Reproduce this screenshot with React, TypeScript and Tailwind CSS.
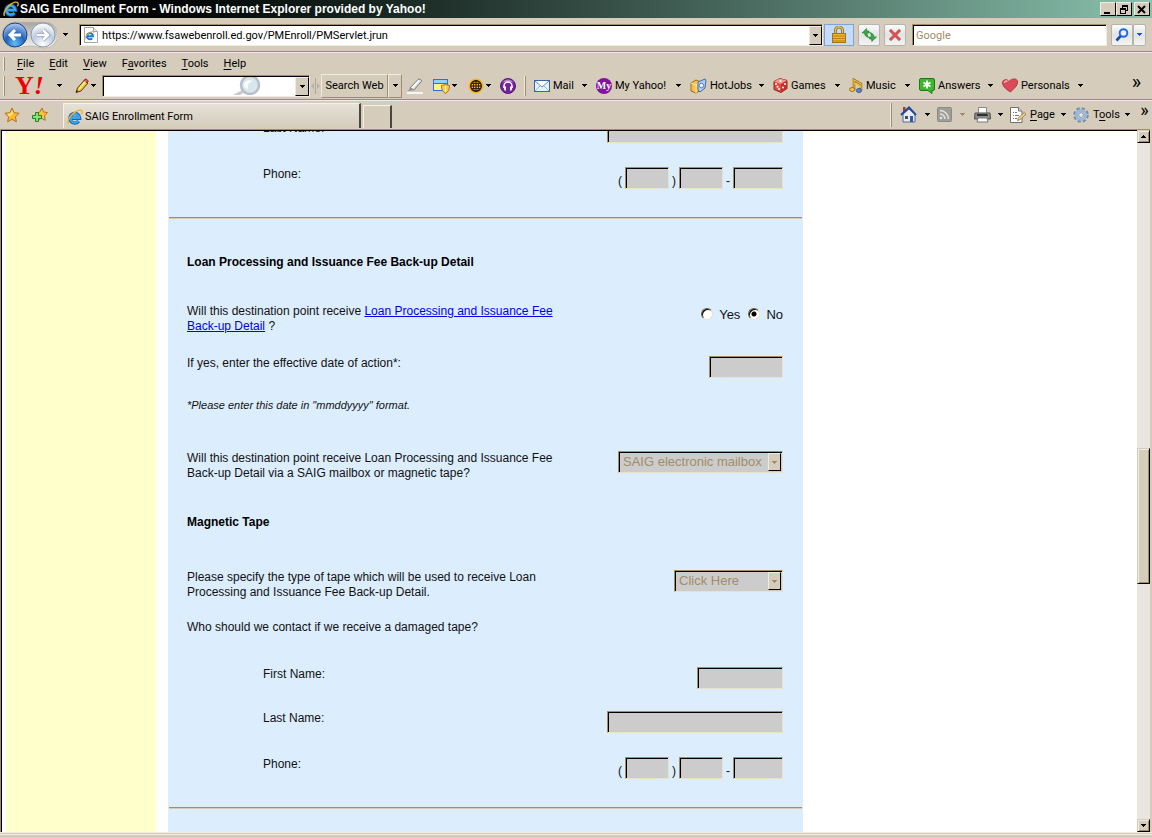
import type { ReactNode } from "react";
import { useState } from "react";

const UI_FONT = "font-['Roboto','Liberation_Sans',sans-serif]";

// Small black triangle used by every drop-down in the toolbars
function Caret({ className = "text-black" }: { className?: string }) {
  return (
    <svg width="5" height="3" viewBox="0 0 5 3" className={`shrink-0 ${className}`} shapeRendering="crispEdges">
      <path d="M0 0h5v1H4v1H3v1H2V2H1V1H0z" fill="currentColor" />
    </svg>
  );
}

function IeLogo({ size = 16 }: { size?: number }) {
  return (
    <svg width={size} height={size} viewBox="0 0 16 16" className="shrink-0">
      <path d="M3.6 9.200h9a4.800 4.800 0 1 0-1 3" fill="none" stroke="#1565c0" strokeWidth="3.600" />
      <path d="M3.6 8.800h8.600a4.400 4.400 0 1 0-.8 3" fill="none" stroke="#39a5ee" strokeWidth="2.200" />
      <path d="M1.500 14.800C-.5 12 4 5 9 2.500c3-1.600 6-2 6.200.2.100 1-.4 2-1 2.600" fill="none" stroke="#f0b31c" strokeWidth="1.400" />
    </svg>
  );
}

function NavCircles() {
  return (
    <svg width="56" height="30" viewBox="0 0 56 30">
      <defs>
        <radialGradient id="back" cx="50%" cy="85%" r="80%">
          <stop offset="0" stopColor="#5ec0f8" />
          <stop offset="0.5" stopColor="#2361b8" />
          <stop offset="1" stopColor="#a6c2ea" />
        </radialGradient>
        <radialGradient id="fwd" cx="50%" cy="90%" r="80%">
          <stop offset="0" stopColor="#ffffff" />
          <stop offset="0.6" stopColor="#bccbdf" />
          <stop offset="1" stopColor="#f4f7fb" />
        </radialGradient>
        <linearGradient id="tray" x2="0" y2="1">
          <stop offset="0" stopColor="#a7a59f" />
          <stop offset="1" stopColor="#f5f4f0" />
        </linearGradient>
      </defs>
      <path d="M14 2h30a13 13 0 0 1 0 26c-6 0-9-2-15-2s-9 2-15 2a13 13 0 0 1 0-26z" fill="url(#tray)" stroke="#c1bbb0" />
      <circle cx="14" cy="15" r="12" fill="url(#back)" stroke="#1d3f87" />
      <circle cx="42" cy="15" r="12" fill="url(#fwd)" stroke="#8b98b0" />
      <path d="M20 15H9m5-5-5 5 5 5" fill="none" stroke="#fff" strokeWidth="3" />
      <path d="M36 15h11m-5-5 5 5-5 5" fill="none" stroke="#8d9ab0" strokeWidth="4" />
      <path d="M36 15h11m-5-5 5 5-5 5" fill="none" stroke="#fff" strokeWidth="2.6" />
    </svg>
  );
}

function PageIe() {
  return (
    <svg width="16" height="16" viewBox="0 0 16 16">
      <path d="M1.500.5h9l4 4v11h-13z" fill="#fff" stroke="#a5a5a5" />
      <path d="M10.500.5v4h4" fill="#e6e6e6" stroke="#a5a5a5" />
      <path d="M3.500 9.300h6.500a3.100 3.100 0 1 0-.8 2" fill="none" stroke="#1c78d2" strokeWidth="2" />
      <path d="M2 13c-.8-2 3-7.500 7.200-8.600 1.500-.3 2 .6 1.400 1.600" fill="none" stroke="#f0b31c" />
    </svg>
  );
}

function Lock() {
  return (
    <svg width="14" height="17" viewBox="0 0 14 17">
      <path d="M3.500 8V4.500a3.500 3.500 0 0 1 7 0V8" fill="none" stroke="#8a6a17" strokeWidth="3" />
      <path d="M3.500 8V4.500a3.500 3.500 0 0 1 7 0V8" fill="none" stroke="#e6c766" strokeWidth="1.400" />
      <rect x=".5" y="7.500" width="13" height="9" fill="#efb52f" stroke="#a5731a" />
      <path d="M1 10h12M1 12.500h12M1 15h12" stroke="#b77f17" />
    </svg>
  );
}

function Refresh() {
  return (
    <svg width="16" height="16" viewBox="0 0 16 16">
      <path d="M5.500 1.500 1 6h2.500c.2 2.500 1.500 4 4.500 4.500C6.500 9 6 8 6.200 6H8V4H6z" fill="#3aa845" stroke="#1c7a2b" strokeWidth=".6" />
      <path d="m10.800 14.500 4.700-4.500H13c-.2-2.500-1.500-4-4.500-4.500C10 7 10.500 8 10.300 10H8.500v2h2z" fill="#3aa845" stroke="#1c7a2b" strokeWidth=".6" />
    </svg>
  );
}

function Stop() {
  return (
    <svg width="14" height="14" viewBox="0 0 14 14">
      <path d="M2 2l10 10M12 2 2 12" stroke="#a5625e" strokeWidth="3" />
      <path d="M2 2l10 10M12 2 2 12" stroke="#e2504b" strokeWidth="1.800" />
    </svg>
  );
}

function Magnifier() {
  return (
    <svg width="14" height="14" viewBox="0 0 14 14">
      <circle cx="8.500" cy="5" r="3.800" fill="#eef5ff" stroke="#1f6be0" strokeWidth="2" />
      <path d="M5.500 8.200 1.500 12.500" stroke="#1649ae" strokeWidth="2.600" />
    </svg>
  );
}

function Pencil() {
  return (
    <svg width="15" height="16" viewBox="0 0 15 16">
      <path d="M1 14.500 2.500 10l7-8 3.500 3-7 8z" fill="#f8c53a" stroke="#5b3a0e" />
      <path d="m9 2.500 1-1.300c1-.8 3.700 1.300 3 2.600L12 5z" fill="#e44f3d" stroke="#7a1d14" strokeWidth=".8" />
      <path d="m4 11 6.500-7.500" stroke="#fff0a8" strokeWidth="1.300" />
      <path d="m1 14.500.8-2.400 1.600 1.300z" fill="#222" />
    </svg>
  );
}

function FadedGlass() {
  return (
    <svg width="29" height="18" viewBox="0 0 29 18">
      <path d="M10 13 1 18h7l5-3z" fill="#c9cbd0" />
      <circle cx="18" cy="8" r="9" fill="#d9e6ee" stroke="#b9bfc8" strokeWidth="2.500" />
      <path d="M12 8c0-4 4-6 9-4-3 1-6 3-5 8-2 0-4-1-4-4z" fill="#fff" opacity=".8" />
    </svg>
  );
}

function Highlighter() {
  return (
    <svg width="16" height="16" viewBox="0 0 16 16">
      <path d="M3 10 11 1.500c1-1 4 0 3.500 1.800L7 12z" fill="#dcdcdc" stroke="#7b7b7b" />
      <path d="m5 10 7-7.500" stroke="#fff" strokeWidth="1.500" />
      <path d="M3 10 1 13l6-1z" fill="#8d8d8d" />
      <path d="M0 15h16" stroke="#f6f6f6" strokeWidth="2" />
    </svg>
  );
}

function PopupGuard() {
  return (
    <svg width="17" height="16" viewBox="0 0 17 16">
      <rect x=".5" y="1.500" width="14" height="11" fill="#fdf58c" stroke="#2f70dc" />
      <path d="M1 2h13v3H1z" fill="#8fd5fb" />
      <path d="M0 5.500h15" stroke="#2f70dc" />
      <path d="m8.500 7.500 4-1 4 1c0 4-1 6-4 8-3-2-4-4-4-8z" fill="#f8cb4c" stroke="#c4691a" />
      <path d="M12.500 8v6" stroke="#fff3b0" strokeWidth="1.500" />
    </svg>
  );
}

function Globe() {
  return (
    <svg width="16" height="16" viewBox="0 0 16 16">
      <circle cx="8" cy="8" r="7.500" fill="#f9b31c" />
      <circle cx="8" cy="8" r="5.300" fill="#f9b31c" stroke="#111" strokeWidth="1.200" />
      <path d="M8 3v10M3 8h10" stroke="#111" />
      <path d="M4 5.500h8M4 10.500h8" stroke="#111" strokeWidth=".8" />
      <ellipse cx="8" cy="8" rx="2.600" ry="5" fill="none" stroke="#111" strokeWidth=".8" />
    </svg>
  );
}

function Headphones() {
  return (
    <svg width="16" height="16" viewBox="0 0 16 16">
      <circle cx="8" cy="8" r="7.500" fill="#74259a" stroke="#5a1780" />
      <path d="M2.500 5a6 6 0 0 1 11 0c-3-2-8-2-11 0z" fill="#b684cf" />
      <path d="M4 10V8a4 4 0 0 1 8 0v2" fill="none" stroke="#fff" strokeWidth="1.500" />
      <path d="M3.500 8.500h2.500v4H4.500zM10 8.500h2.500l-1 4H10z" fill="#fff" />
    </svg>
  );
}

function MailIcon() {
  return (
    <svg width="16" height="12" viewBox="0 0 16 12">
      <rect x=".5" y=".5" width="15" height="11" fill="#e4f4fe" stroke="#3c62ae" />
      <path d="M1 11 6 6m9 5-5-5" stroke="#8bbbe4" />
      <path d="m1 1 7 6 7-6" fill="#fff" stroke="#5b8cc9" />
    </svg>
  );
}

function MyIcon() {
  return (
    <span className="flex size-4 shrink-0 items-center justify-center rounded-full bg-[#83129c] font-['Liberation_Serif',serif] text-[10px] leading-none font-bold text-white">
      My
    </span>
  );
}

function JobsIcon() {
  return (
    <svg width="17" height="16" viewBox="0 0 17 16">
      <path d="m1 5 5-3 5 2v8l-5 3-5-2z" fill="#f6c14b" stroke="#9a681b" />
      <path d="m1 5 5 2 5-3M6 7v8" fill="none" stroke="#fde7a7" />
      <path d="m8 4 7-3 1 1-1 8-5 4-2-2z" fill="#a9cdf2" stroke="#4a6da7" />
      <circle cx="11.500" cy="7.500" r="2.200" fill="#fff" stroke="#5278b5" />
    </svg>
  );
}

function Dice() {
  return (
    <svg width="15" height="15" viewBox="0 0 15 15">
      <path d="m1 3.500 6-3 7 2v8l-6 4-7-3z" fill="#e5493f" stroke="#93231f" />
      <path d="m1 3.500 6-3 7 2-6 3.500z" fill="#f7948b" />
      <path d="M8 6v8l6-4V2.500z" fill="#c2302b" />
      <g fill="#fff">
        <circle cx="3" cy="6" r="1" />
        <circle cx="6" cy="11" r="1" />
        <circle cx="4.500" cy="8.700" r="1" />
        <circle cx="7.500" cy="3" r="1" />
        <circle cx="10" cy="9.500" r="1" />
        <circle cx="12" cy="6" r="1" />
      </g>
    </svg>
  );
}

function MusicIcon() {
  return (
    <svg width="14" height="15" viewBox="0 0 14 15">
      <path d="M5 12V2l7 4v6" fill="none" stroke="#6d4a10" strokeWidth="2.400" />
      <path d="M5 12V2l7 4v6M5 5l7 4" fill="none" stroke="#f4bc32" strokeWidth="1.400" />
      <ellipse cx="3.200" cy="11.500" rx="2.600" ry="2" fill="#f9c63d" stroke="#7c571a" strokeWidth=".8" />
      <ellipse cx="10" cy="12.500" rx="2.600" ry="2" fill="#5e86d8" stroke="#28438d" strokeWidth=".8" />
    </svg>
  );
}

function AnswersIcon() {
  return (
    <svg width="16" height="16" viewBox="0 0 16 16">
      <path d="M2 .5h12q1.500 0 1.500 1.500v9q0 1.500-1.500 1.500h-1v3l-4-3H2Q.5 12.500.5 11V2Q.5.5 2 .5z" fill="#3eb62e" stroke="#187d16" />
      <path d="M8 2.500v8M4.500 4.500l7 4M11.500 4.500l-7 4" stroke="#fff" strokeWidth="1.800" />
    </svg>
  );
}

function Heart() {
  return (
    <svg width="16" height="15" viewBox="0 0 16 15">
      <path d="M8.500 14C5 12 .5 8.500.5 4.700.5 1.500 5 .5 7 3.500 9 .5 15.500-.5 15.500 4c0 4-4 7-7 10z" fill="#dc4a57" stroke="#a32735" strokeWidth=".8" />
      <path d="M2.500 5c0-2 2-2.500 3-1.500" fill="none" stroke="#fbb8bd" strokeWidth="1.500" />
    </svg>
  );
}

function Star() {
  return (
    <svg width="16" height="16" viewBox="0 0 16 16">
      <path d="m8 1 2.100 4.700 5 .6-3.700 3.500 1 5L8 12.300l-4.400 2.500 1-5L.9 6.300l5-.6z" fill="#fbb92c" stroke="#b9711b" />
      <path d="m8 3.500 1.200 3.200-4 3L3.500 7l3-.6z" fill="#fde48b" />
    </svg>
  );
}

function AddStar() {
  return (
    <svg width="17" height="16" viewBox="0 0 17 16">
      <path d="m11 1 1.500 4 4 .5-3 3.300.8 4.500-4-2L6 13.500l1-4.700L4.500 6l4-.7z" fill="#fbc33e" stroke="#b9711b" />
      <path d="M4.500 5.500h3v3h3v3h-3v3h-3v-3h-3v-3h3z" fill="#8be06c" stroke="#1d8427" />
    </svg>
  );
}

function Home() {
  return (
    <svg width="17" height="17" viewBox="0 0 17 17">
      <path d="M3 8v8h12V8L9 3z" fill="#e4ecf7" stroke="#5a6b8c" />
      <path d="M3 1h2.500v5H3z" fill="#a73c34" />
      <path d="M1 9 9 1.500 16 9" fill="none" stroke="#24479b" strokeWidth="2" />
      <path d="M10 10h3v6h-3z" fill="#3457a5" />
      <path d="M5 10h3v3H5z" fill="#4d4d4d" />
    </svg>
  );
}

function Rss() {
  return (
    <svg width="15" height="15" viewBox="0 0 15 15">
      <rect x=".5" y=".5" width="14" height="14" rx="1" fill="#a09e99" stroke="#8d8a85" />
      <circle cx="4" cy="11" r="1.300" fill="#e6e4df" />
      <path d="M3 7a5 5 0 0 1 5 5M3 3.500a8.500 8.500 0 0 1 8.500 8.500" fill="none" stroke="#e6e4df" strokeWidth="1.500" />
    </svg>
  );
}

function Printer() {
  return (
    <svg width="17" height="16" viewBox="0 0 17 16">
      <path d="M4.500.5h8v6h-8z" fill="#fff" stroke="#8a8a8a" />
      <path d="M1 6h15l.5 6H.5z" fill="#8c8c8c" stroke="#4f4f4f" />
      <path d="M3 8h11" stroke="#303030" strokeWidth="2" />
      <path d="M4 11h9l1 4H3z" fill="#fff" stroke="#7a7a7a" />
      <path d="M13.500 7h1.500v1h-1.500z" fill="#4fd04f" />
    </svg>
  );
}

function PageIcon() {
  return (
    <svg width="17" height="16" viewBox="0 0 17 16">
      <path d="M.5.5h8l3.500 3.500v11.500H.5z" fill="#fff" stroke="#707070" />
      <path d="M8.500.5V4H12" fill="#ddd" stroke="#707070" />
      <path d="M3 5.500h1m1 0h2M3 8.500h1m1 0h4M3 11.500h1m1 0h2" stroke="#777" />
      <path d="m7.500 13.500.7-2.500 6-5.500 1.800 1.700-6 5.500z" fill="#f4cf7c" stroke="#8d7340" strokeWidth=".8" />
    </svg>
  );
}

function Gear() {
  return (
    <svg width="16" height="16" viewBox="0 0 16 16">
      <circle cx="8" cy="8" r="6.500" fill="none" stroke="#748ca9" strokeWidth="2.600" strokeDasharray="3.100 1.984" />
      <circle cx="8" cy="8" r="4.600" fill="#d4e3f2" stroke="#9db8d6" strokeWidth="3" />
      <circle cx="8" cy="8" r="2.400" fill="#ece8df" stroke="#6c84a3" strokeWidth=".8" />
    </svg>
  );
}

function Grip({ className = "h-4" }: { className?: string }) {
  return <span className={`w-[2px] shrink-0 border-r border-[#a28d68] bg-[#f0ebe1] ${className}`} />;
}

function WindowButton({ label, children }: { label: string; children: ReactNode }) {
  return (
    <button
      type="button"
      aria-label={label}
      className="flex h-[14px] w-4 items-center justify-center border border-t-[#f0ebe1] border-r-black border-b-black border-l-[#f0ebe1] bg-[#d5ccbb]"
    >
      <svg width="10" height="9" viewBox="0 0 10 9" fill="none" stroke="#000" shapeRendering="crispEdges">
        {children}
      </svg>
    </button>
  );
}

function TitleBar() {
  return (
    <header className="flex h-[18px] shrink-0 items-center bg-linear-to-r from-black to-[#8ac2ae] pr-[2px] pl-[3px]">
      <IeLogo />
      <h1 className="ml-px flex-1 truncate font-['Liberation_Sans',Arial,sans-serif] text-[12px] leading-[18px] font-bold text-white">
        SAIG Enrollment Form - Windows Internet Explorer provided by Yahoo!
      </h1>
      <WindowButton label="Minimize">
        <path d="M1 8h6" strokeWidth="2" />
      </WindowButton>
      <WindowButton label="Restore">
        <path d="M3 .5h6M3 1.500h6M3.500 1v2M8.500 1v5M7 5.500h2" />
        <path d="M1 3.500h6M1 4.500h6M1.500 4v4.500M6.500 4v4.500M1 8.500h6" />
      </WindowButton>
      <span className="w-[2px]" />
      <WindowButton label="Close">
        <path d="m1 1 7 7M8 1 1 8" strokeWidth="2" shapeRendering="auto" />
      </WindowButton>
    </header>
  );
}

const glassButton =
  "flex h-[22px] items-center justify-center rounded-xs border border-[#b5b3ae] bg-linear-to-b from-[#fbfbfb] via-[#e3e3e3] to-[#f4f4f4]";

function AddressBar() {
  const [address, setAddress] = useState("https://www.fsawebenroll.ed.gov/PMEnroll/PMServlet.jrun");

  return (
    <div className="flex h-[33px] shrink-0 items-center pr-[6px] pl-px">
      <button type="button" aria-label="Back and forward">
        <NavCircles />
      </button>
      <button type="button" aria-label="Recent pages" className="w-[22px] pl-[6px]">
        <Caret />
      </button>
      <div className="flex h-[22px] flex-1 items-center border border-t-[#a28d68] border-r-[#f0ebe1] border-b-[#f0ebe1] border-l-[#a28d68] bg-white pl-[3px] shadow-[inset_1px_1px_#000]">
        <PageIe />
        <input
          aria-label="Address"
          value={address}
          onChange={(e) => setAddress(e.target.value)}
          className="ml-[3px] min-w-0 flex-1 bg-transparent pt-[2px] outline-none"
        />
        <button
          type="button"
          aria-label="Show addresses"
          className="mt-px flex h-[19px] w-[13px] items-center justify-center border border-t-[#f0ebe1] border-r-black border-b-black border-l-[#f0ebe1] bg-[#d5ccbb]"
        >
          <Caret />
        </button>
      </div>
      <button
        type="button"
        aria-label="Security report"
        className="mr-1 ml-px flex h-[22px] w-[30px] items-center justify-center border border-[#7fa3d8] bg-[#c4dbfa]"
      >
        <Lock />
      </button>
      <button type="button" aria-label="Refresh" className={`${glassButton} mr-1 w-[22px]`}>
        <Refresh />
      </button>
      <button type="button" aria-label="Stop" className={`${glassButton} mr-[6px] w-[22px]`}>
        <Stop />
      </button>
      <input
        aria-label="Search"
        placeholder="Google"
        className="mr-1 h-[22px] w-[195px] border border-t-[#a28d68] border-r-[#f0ebe1] border-b-[#f0ebe1] border-l-[#a28d68] bg-white pt-[2px] pl-[3px] shadow-[inset_1px_1px_#000] outline-none placeholder:text-[#a28d68]"
      />
      <button type="button" aria-label="Run search" className={`${glassButton} w-[22px]`}>
        <Magnifier />
      </button>
      <button type="button" aria-label="Search options" className={`${glassButton} w-[13px]`}>
        <Caret className="text-[#1457d0]" />
      </button>
    </div>
  );
}

const menus = [
  { before: "", key: "F", after: "ile" },
  { before: "", key: "E", after: "dit" },
  { before: "", key: "V", after: "iew" },
  { before: "F", key: "a", after: "vorites" },
  { before: "", key: "T", after: "ools" },
  { before: "", key: "H", after: "elp" },
];

function MenuBar() {
  return (
    <nav className="flex h-5 shrink-0 items-center gap-[15px] border-t border-[#f0ebe1] pt-[2px] pl-[3px]">
      <Grip className="mr-[-3px] h-[14px]" />
      {menus.map((menu) => (
        <button type="button" key={menu.key}>
          {menu.before}
          <span className="underline underline-offset-2">{menu.key}</span>
          {menu.after}
        </button>
      ))}
    </nav>
  );
}

// Each shortcut owns a fixed slot so its arrow lines up at the right end
const shortcuts = [
  { label: "Mail", icon: <MailIcon />, slot: "w-[62px]" },
  { label: "My Yahoo!", icon: <MyIcon />, slot: "w-[94px]" },
  { label: "HotJobs", icon: <JobsIcon />, slot: "w-[83px]" },
  { label: "Games", icon: <Dice />, slot: "w-[76px]" },
  { label: "Music", icon: <MusicIcon />, slot: "w-[70px]" },
  { label: "Answers", icon: <AnswersIcon />, slot: "w-[83px]" },
  { label: "Personals", icon: <Heart />, slot: "w-[90px]" },
];

function YahooToolbar() {
  return (
    <div className="flex h-[26px] shrink-0 items-center pt-px pr-[11px] pl-[3px]">
      <Grip className="h-5" />
      <button
        type="button"
        className="ml-[10px] w-8 text-left font-['Liberation_Serif',serif] text-[26px] leading-none font-bold text-[#f00000]"
      >
        Y<i>!</i>
      </button>
      <button type="button" aria-label="Yahoo menu" className="w-7 pl-[10px]">
        <Caret />
      </button>
      <button type="button" aria-label="Edit buttons" className="flex w-[27px] items-center gap-px">
        <Pencil />
        <Caret />
      </button>
      <div className="flex h-[22px] w-[208px] items-center overflow-hidden border border-t-[#a28d68] border-r-[#f0ebe1] border-b-[#f0ebe1] border-l-[#a28d68] bg-white shadow-[inset_1px_1px_#000]">
        <input aria-label="Yahoo search" className="min-w-0 flex-1 bg-transparent pl-1 outline-none" />
        <FadedGlass />
        <button
          type="button"
          aria-label="Search history"
          className="mt-px ml-[34px] flex h-[19px] w-[14px] items-center justify-center border border-t-[#f0ebe1] border-r-black border-b-black border-l-[#f0ebe1] bg-[#d5ccbb]"
        >
          <Caret />
        </button>
      </div>
      <svg width="11" height="18" viewBox="0 0 11 18" className="shrink-0">
        <path d="M5.500 1v16" stroke="#a9a7a2" />
        <path d="M4 6 1 9l3 3zM7 6l3 3-3 3z" fill="#b3b1ac" />
      </svg>
      <button
        type="button"
        className="h-6 w-[67px] shrink-0 border border-t-[#f0ebe1] border-r-[#a28d68] border-b-[#a28d68] border-l-[#f0ebe1] whitespace-nowrap"
      >
        Search Web
      </button>
      <button
        type="button"
        aria-label="Search kinds"
        className="flex h-6 w-[14px] shrink-0 items-center justify-center border border-t-[#f0ebe1] border-r-[#a28d68] border-b-[#a28d68] border-l-[#f0ebe1]"
      >
        <Caret />
      </button>
      <button type="button" aria-label="Highlight" className="ml-[5px] w-[26px]">
        <Highlighter />
      </button>
      <button type="button" aria-label="Pop-up blocker" className="flex w-[35px] items-center gap-[2px]">
        <PopupGuard />
        <Caret />
      </button>
      <button type="button" aria-label="Web" className="flex w-8 items-center gap-[2px]">
        <Globe />
        <Caret />
      </button>
      <button type="button" aria-label="Listen" className="w-6">
        <Headphones />
      </button>
      <Grip className="mr-2 h-5" />
      {shortcuts.map((shortcut) => (
        <button
          type="button"
          key={shortcut.label}
          className={`flex shrink-0 items-center gap-[3px] pr-[9px] whitespace-nowrap ${shortcut.slot}`}
        >
          {shortcut.icon}
          {shortcut.label}
          <Caret className="ml-auto text-black" />
        </button>
      ))}
      <button type="button" aria-label="More shortcuts" className="mb-2 ml-auto text-[20px] leading-none">
        »
      </button>
    </div>
  );
}

function TabBar() {
  return (
    <div className="flex h-7 shrink-0 items-end border-t border-[#f0ebe1] pr-[2px] pl-1">
      <button type="button" aria-label="Favorites center" className="w-[27px] self-center">
        <Star />
      </button>
      <button type="button" aria-label="Add to favorites" className="w-8 self-center">
        <AddStar />
      </button>
      <button
        type="button"
        className="flex h-[25px] w-[298px] items-center gap-[2px] border-t border-r-2 border-l border-t-[#f5f2ec] border-r-[#4b463e] border-l-[#f5f2ec] bg-linear-to-b from-[#e6e1d8] to-[#d5ccbb] pt-[2px] pl-[3px]"
      >
        <IeLogo />
        SAIG Enrollment Form
      </button>
      <button
        type="button"
        aria-label="New tab"
        className="ml-[2px] h-[23px] w-[29px] border-t border-r-2 border-l border-t-[#f5f2ec] border-r-[#4b463e] border-l-[#f5f2ec]"
      />
      <div className="ml-auto flex h-full items-center">
        <Grip className="mr-2 h-6" />
        <button type="button" aria-label="Home" className="flex w-[37px] items-center gap-2">
          <Home />
          <Caret />
        </button>
        <button type="button" aria-label="Feeds" className="flex w-[37px] items-center gap-2">
          <Rss />
          <Caret className="text-[#a28d68]" />
        </button>
        <button type="button" aria-label="Print" className="flex w-9 items-center gap-[7px]">
          <Printer />
          <Caret />
        </button>
        <button type="button" className="flex w-[63px] items-center gap-[3px]">
          <PageIcon />
          <span>
            <span className="underline underline-offset-2">P</span>age
          </span>
          <Caret className="mr-[7px] ml-auto text-black" />
        </button>
        <button type="button" className="flex w-[66px] items-center gap-1">
          <Gear />
          <span>
            T<span className="underline underline-offset-2">o</span>ols
          </span>
          <Caret className="mr-[9px] ml-auto text-black" />
        </button>
        <button type="button" aria-label="More commands" className="w-[11px] self-start text-[18px] leading-none">
          »
        </button>
      </div>
    </div>
  );
}

const sunken =
  "h-[22px] border border-t-[#a28d68] border-r-[#ebe0cc] border-b-[#ebe0cc] border-l-[#a28d68] bg-[#ccc] shadow-[inset_1px_1px_#000]";

function Row({ children, className = "" }: { children: ReactNode; className?: string }) {
  return <div className={`flex items-start justify-between pr-5 pl-[19px] ${className}`}>{children}</div>;
}

function TextRow({ id, label, width, className = "" }: { id: string; label: string; width: string; className?: string }) {
  return (
    <Row className={className}>
      <label htmlFor={id} className="pl-[76px]">
        {label}
      </label>
      <input id={id} disabled className={`${sunken} ${width}`} />
    </Row>
  );
}

function PhoneRow({ id }: { id: string }) {
  return (
    <Row className="mt-6">
      <label htmlFor={id} className="pl-[76px]">
        Phone:
      </label>
      <div className="flex items-end">
        <span className="w-[7px]">(</span>
        <input id={id} disabled className={`${sunken} w-11`} />
        <span className="w-[10px] text-center">)</span>
        <input aria-label="Phone prefix" disabled className={`${sunken} w-11`} />
        <span className="w-[10px] text-center">-</span>
        <input aria-label="Phone line number" disabled className={`${sunken} w-[50px]`} />
      </div>
    </Row>
  );
}

function ClassicSelect({ id, option, width }: { id: string; option: string; width: string }) {
  return (
    <div className={`relative ${width}`}>
      <select id={id} disabled className={`${sunken} w-full appearance-none pl-1 text-[13px] leading-[20px] text-[#a28d68] opacity-100`}>
        <option>{option}</option>
      </select>
      <span className="pointer-events-none absolute top-[2px] right-[2px] flex h-[18px] w-[13px] items-center justify-center border border-t-[#f0ebe1] border-r-black border-b-black border-l-[#f0ebe1] bg-[#d5ccbb]">
        <Caret className="text-[#a28d68]" />
      </span>
    </div>
  );
}

function Divider() {
  return <hr className="mx-px mt-7 h-[2px] border-t border-b border-t-[#a28d68] border-b-[#d5ccbb]" />;
}

const radio =
  "mb-[2px] size-3 appearance-none rounded-full border border-t-[#6b5c42] border-r-[#ebe0cc] border-b-[#ebe0cc] border-l-[#6b5c42] bg-white shadow-[inset_1px_1px_#000] checked:bg-[radial-gradient(circle,#000_2px,#fff_3px)]";

function EnrollmentForm() {
  const [receive, setReceive] = useState("no");

  return (
    <form className="mt-[-10px] w-[635px] bg-[#dcedfe] font-['Liberation_Sans',Arial,sans-serif] text-[12px] leading-[15px] text-[#111]">
      <TextRow id="prev-last" label="Last Name:" width="w-[176px]" />
      <PhoneRow id="prev-phone" />
      <Divider />

      <h2 className="mt-9 pl-[19px] font-bold text-black">Loan Processing and Issuance Fee Back-up Detail</h2>
      <Row className="mt-[34px]">
        <p className="w-[390px]">
          Will this destination point receive{" "}
          <a href="#detail" className="text-[#0000ee] underline">
            Loan Processing and Issuance Fee Back-up Detail
          </a>{" "}
          ?
        </p>
        <div className="flex pt-[3px] text-[13px]">
          <label className="flex items-center gap-[6px]">
            <input type="radio" name="receive" checked={receive === "yes"} onChange={() => setReceive("yes")} className={radio} />
            Yes
          </label>
          <label className="ml-2 flex items-center gap-[6px]">
            <input type="radio" name="receive" checked={receive === "no"} onChange={() => setReceive("no")} className={radio} />
            No
          </label>
        </div>
      </Row>
      <Row className="mt-[22px]">
        <label htmlFor="effective">If yes, enter the effective date of action*:</label>
        <input id="effective" disabled className={`${sunken} w-[74px]`} />
      </Row>
      <p className="mt-5 pl-[19px] text-[11px] italic">*Please enter this date in "mmddyyyy" format.</p>
      <Row className="mt-[38px]">
        <label htmlFor="delivery" className="w-[390px]">
          Will this destination point receive Loan Processing and Issuance Fee Back-up Detail via a SAIG mailbox or magnetic tape?
        </label>
        <ClassicSelect id="delivery" option="SAIG electronic mailbox" width="w-[165px]" />
      </Row>

      <h2 className="mt-[34px] pl-[19px] font-bold text-black">Magnetic Tape</h2>
      <Row className="mt-10">
        <label htmlFor="tape" className="w-[390px]">
          Please specify the type of tape which will be used to receive Loan Processing and Issuance Fee Back-up Detail.
        </label>
        <ClassicSelect id="tape" option="Click Here" width="w-[109px]" />
      </Row>
      <p className="mt-5 pl-[19px]">Who should we contact if we receive a damaged tape?</p>
      <TextRow id="first" label="First Name:" width="w-[86px]" className="mt-8" />
      <TextRow id="last" label="Last Name:" width="w-[176px]" className="mt-[22px]" />
      <PhoneRow id="phone" />
      <Divider />
      <div className="h-10" />
    </form>
  );
}

const scrollPart =
  "flex w-[13px] items-center justify-center border border-t-[#d5ccbb] border-r-black border-b-black border-l-[#d5ccbb] bg-[#d5ccbb] shadow-[inset_1px_1px_#f0ebe1,inset_-1px_-1px_#a28d68]";

function ScrollBar() {
  return (
    <div className="flex w-[13px] shrink-0 flex-col bg-[#e9e5df]">
      <button type="button" aria-label="Scroll up" className={`${scrollPart} h-[13px] shrink-0`}>
        <Caret className="rotate-180 text-black" />
      </button>
      <div className="flex-[305]" />
      <div className={`${scrollPart} flex-[135]`} />
      <div className="flex-[235]" />
      <button type="button" aria-label="Scroll down" className={`${scrollPart} h-[13px] shrink-0`}>
        <Caret />
      </button>
    </div>
  );
}

export default function App() {
  return (
    <div className={`flex h-screen flex-col overflow-hidden bg-[#d5ccbb] text-[11px] leading-[14px] text-black ${UI_FONT}`}>
      <TitleBar />
      <AddressBar />
      <div className="h-px shrink-0 bg-[#a28d68]" />
      <MenuBar />
      <YahooToolbar />
      <div className="mt-px h-px shrink-0 bg-[#a28d68]" />
      <TabBar />
      <div className="mt-px mr-[2px] flex min-h-0 flex-1 border-t border-l border-[#a28d68]">
        <main className="flex min-w-0 flex-1 overflow-hidden border-t border-l border-black bg-white pl-1">
          <aside className="w-[150px] shrink-0 bg-[#ffffcc]" />
          <div className="ml-3">
            <EnrollmentForm />
          </div>
        </main>
        <ScrollBar />
      </div>
      <footer className="h-[6px] shrink-0 border-t border-[#f0ebe1] pt-px">
        <div className="h-px bg-[#f0ebe1]" />
      </footer>
    </div>
  );
}
